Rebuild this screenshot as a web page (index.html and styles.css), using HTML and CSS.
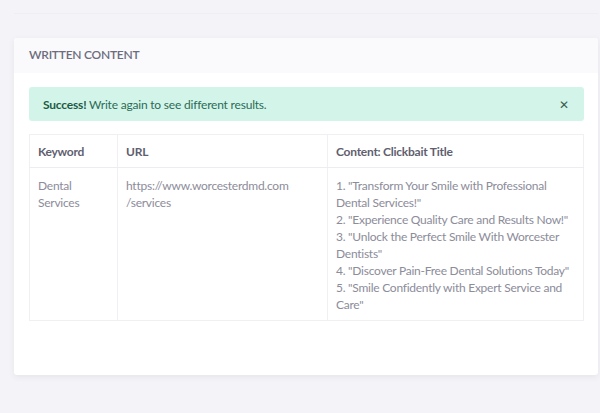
FILE: index.html
```html
<!DOCTYPE html>
<html>
<head>
<meta charset="utf-8">
<link rel="stylesheet" href="styles.css">
</head>
<body>
<div class="page">
  <div class="top-strip"></div>
  <div class="card">
    <div class="card-header">Written Content</div>
    <div class="card-body">
      <div class="alert">
        <span><strong>Success!</strong> Write again to see different results.</span>
        <span class="close">&#x2715;</span>
      </div>
      <table class="results">
        <thead>
          <tr><th class="c1">Keyword</th><th class="c2">URL</th><th class="c3">Content: Clickbait Title</th></tr>
        </thead>
        <tbody>
          <tr>
            <td>Dental Services</td>
            <td>https://www.worcesterdmd.com<br>/services</td>
            <td>1. "Transform Your Smile with Professional Dental Services!"<br>2. "Experience Quality Care and Results Now!"<br>3. "Unlock the Perfect Smile With Worcester Dentists"<br>4. "Discover Pain-Free Dental Solutions Today"<br>5. "Smile Confidently with Expert Service and Care"</td>
          </tr>
        </tbody>
      </table>
    </div>
  </div>
</div>
</body>
</html>
```
FILE: styles.css
```css
html, body {
  margin: 0;
  padding: 0;
  background: #f4f4f8;
  font-family: "Lato", "Open Sans", sans-serif;
}
.page {
  padding: 0 2px 0 14px;
  height: 413px;
  box-sizing: border-box;
}
.top-strip {
  height: 13px;
  border-bottom: 1px solid #eeeef3;
  margin-bottom: 24px;
}
.card {
  background: #fff;
  border-radius: 3px;
  box-shadow: 0 2px 6px rgba(40, 40, 80, 0.08);
}
.card-header {
  height: 35px;
  box-sizing: border-box;
  display: flex;
  align-items: center;
  padding: 0 15px 2px;
  background: #fafafd;
  text-transform: uppercase;
  font-size: 12px;
  font-weight: 600;
  color: #6c6c7c;
  letter-spacing: -0.25px;
  border-radius: 3px 3px 0 0;
}
.card-body {
  padding: 14px 14px 54px 15px;
}
.alert {
  height: 34px;
  background: #d3f5e9;
  border-radius: 3px;
  display: flex;
  align-items: center;
  justify-content: space-between;
  padding: 0 15px 0 14px;
  font-size: 12px;
  letter-spacing: -0.2px;
  color: #2d6b57;
  margin-bottom: 13px;
}
.alert strong {
  font-weight: 700;
  color: #1d5a45;
}
.close {
  font-size: 12px;
  color: #3a5e52;
}
.results {
  width: 100%;
  border-collapse: collapse;
  font-size: 12px;
  letter-spacing: -0.25px;
  border: 1px solid #f0f0f4;
}
.results th {
  text-align: left;
  height: 32px;
  padding: 0 8px;
  font-weight: 700;
  color: #5f5f70;
  border-bottom: 1px solid #ececf2;
  border-right: 1px solid #f0f0f4;
}
.results td {
  vertical-align: top;
  padding: 9px 8px 7px 8px;
  line-height: 17px;
  color: #8c8c9a;
  border-right: 1px solid #f0f0f4;
}
.c1 { width: 71px; }
.c2 { width: 193px; }
```
